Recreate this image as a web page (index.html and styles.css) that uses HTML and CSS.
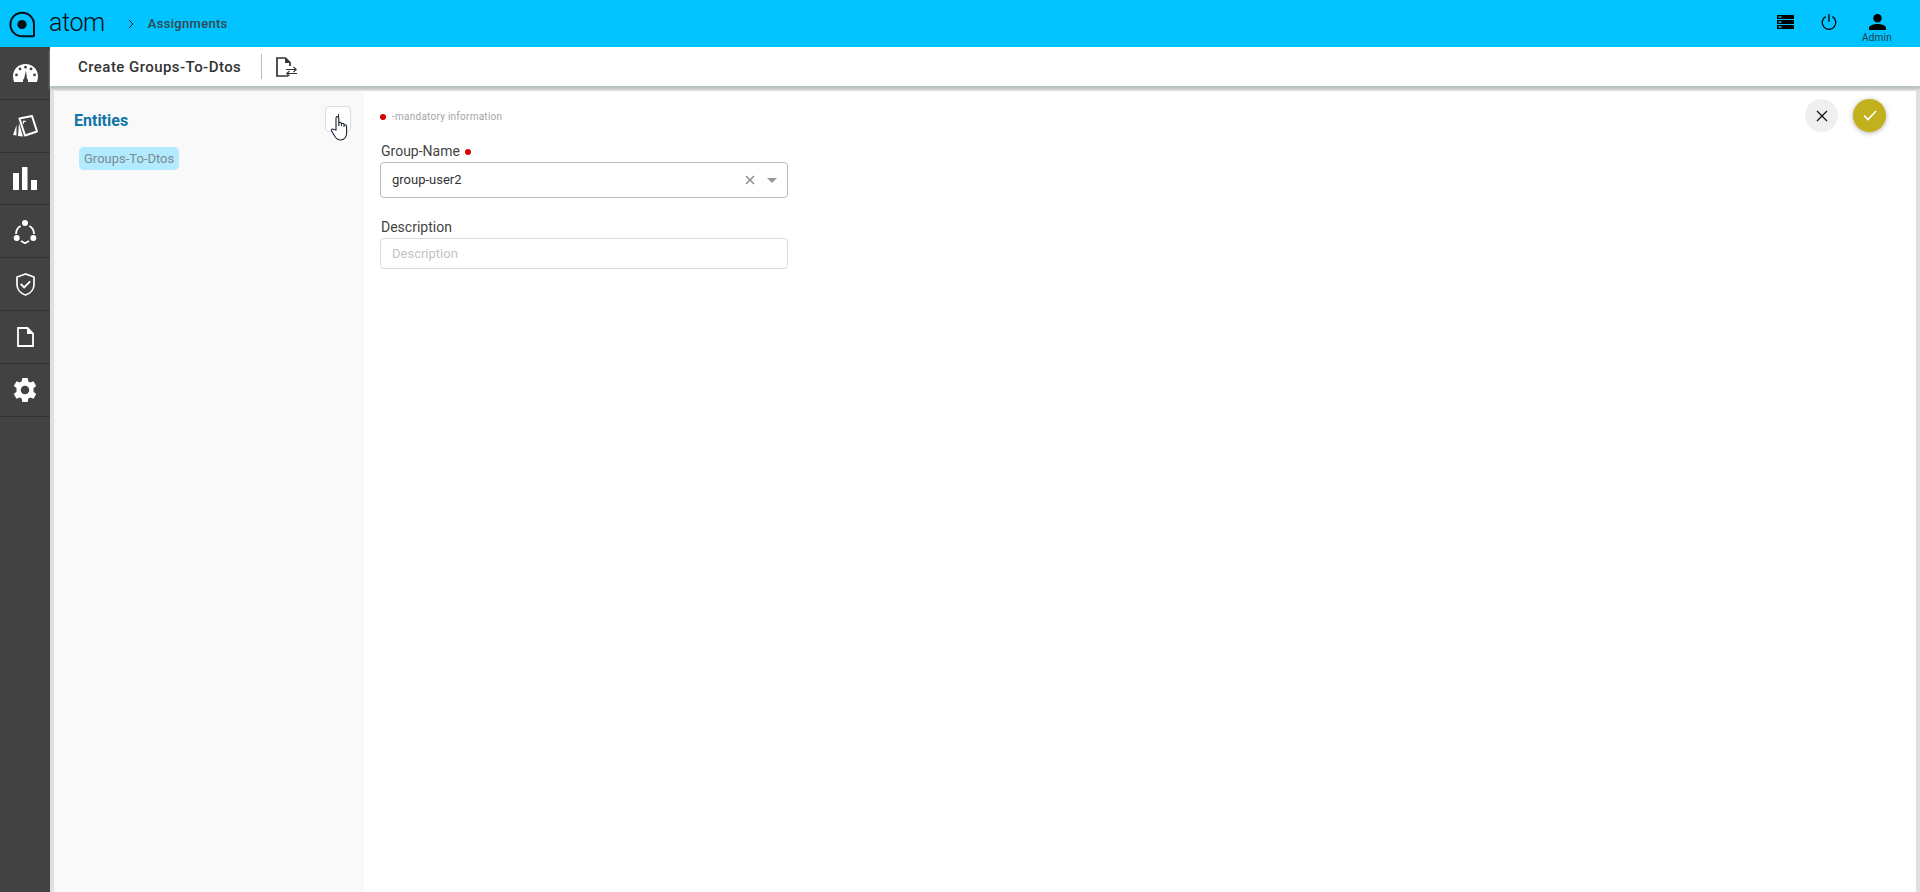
FILE: index.html
```html
<!DOCTYPE html>
<html lang="en">
<head>
<meta charset="utf-8">
<title>Create Groups-To-Dtos</title>
<link rel="stylesheet" href="styles.css">
</head>
<body>
<header class="topbar">
  <div class="brand">
    <svg class="brand-mark" width="27" height="27" viewBox="0 0 27 27"><path d="M25 25.500v-12a11.800 11.800 0 1 0-11.800 11.800H25" fill="none" stroke="#0a0f14" stroke-width="2"/><circle cx="13" cy="13.500" r="4.600" fill="#0a0f14"/></svg>
    <span class="brand-name">atom</span>
  </div>
  <svg class="crumb-arrow" width="8" height="10" viewBox="0 0 8 10"><path d="M2 1l4 4-4 4" fill="none" stroke="#222" stroke-width="1"/></svg>
  <span class="crumb">Assignments</span>
  <div class="top-actions">
    <svg class="top-icon" width="17" height="14" viewBox="0 0 17 14"><path fill="#000" fill-rule="evenodd" d="M0 0h17v4H0zM1.500 1.200v1.600h3V1.200zM0 5h17v4H0zM1.500 6.200v1.600h3V6.200zM0 10h17v4H0zM1.500 11.200v1.600h3v-1.600z"/></svg>
    <svg class="top-icon power" width="16" height="16" viewBox="0 0 16 16"><path d="M8 0v8M4.600 2.600a6.800 6.800 0 1 0 6.800 0" fill="none" stroke="#000" stroke-width="1.300"/></svg>
    <div class="user">
      <svg width="17" height="16" viewBox="0 0 17 16"><circle cx="8.500" cy="4.300" r="4.200"/><path d="M0 16v-2.100C0 11 5.200 9.900 8.500 9.900s8.500 1.100 8.500 4V16z"/></svg>
      <span class="user-name">Admin</span>
    </div>
  </div>
</header>
<div class="body-row">
  <nav class="sidebar">
    <a class="nav-item"><svg width="25" height="18" viewBox="0 0 25 18"><path fill="#fff" fill-rule="evenodd" d="M12.500 0C5.600 0 0 5.300 0 12.200c0 2.100.4 4 1.200 5.800h8.900a2.900 2.900 0 0 1 1-3.600l1.900-7.900 1 8a3 3 0 0 1 .9 3.500h9c.7-1.800 1.100-3.700 1.100-5.800C25 5.300 19.400 0 12.500 0zM7 3.500a1.400 1.400 0 1 1 0 2.800 1.400 1.400 0 0 1 0-2.800zM18 3.500a1.400 1.400 0 1 1 0 2.800 1.400 1.400 0 0 1 0-2.800zM12.500 1.800a1.400 1.400 0 1 1 0 2.800 1.400 1.400 0 0 1 0-2.800zM3.500 9.500a1.400 1.400 0 1 1 0 2.800 1.400 1.400 0 0 1 0-2.800zM21.500 9.500a1.400 1.400 0 1 1 0 2.800 1.400 1.400 0 0 1 0-2.800z"/></svg></a>
    <a class="nav-item"><svg width="25" height="22" viewBox="0 0 25 22"><path d="M6.500 3.500L19 1l5 15.500-12 4z" fill="none" stroke="#fff" stroke-width="2" stroke-linejoin="round"/><path d="M9.800 5.800v3h1.200V7h1.700V5.800z" fill="#fff"/><path fill="#fff" d="M3.500 10L0 20l3.500.5zM6 8L5 21l5 .5z"/></svg></a>
    <a class="nav-item"><svg width="24" height="23" viewBox="0 0 24 23"><path fill="#fff" d="M0 6h6v17H0zM9 0h5.500v23H9zM18 13h6v10h-6z"/></svg></a>
    <a class="nav-item"><svg width="24" height="24" viewBox="0 0 24 24"><g fill="#fff"><circle cx="12" cy="3" r="3"/><circle cx="3.700" cy="18" r="3"/><circle cx="20.300" cy="18" r="3"/></g><path d="M7.700 6C5 7.500 3 10.500 3 14M16.300 6c2.700 1.500 4.700 4.500 4.700 8M8 21l4 2.200 4-2.200" fill="none" stroke="#fff" stroke-width="1.800"/></svg></a>
    <a class="nav-item"><svg width="19" height="23" viewBox="0 0 19 23"><path d="M9.500 1L1 4v7.500C1 16.500 4.600 20.500 9.500 22c4.900-1.500 8.500-5.500 8.500-10.500V4z" fill="none" stroke="#fff" stroke-width="1.700"/><path d="M4.800 11l3.300 3.300 6-6" fill="none" stroke="#fff" stroke-width="1.900"/></svg></a>
    <a class="nav-item"><svg width="17" height="20" viewBox="0 0 17 20"><path d="M1 1h9.500L16 6.500V19H1z" fill="none" stroke="#fff" stroke-width="1.800"/><path d="M10 1v6h6z" fill="#fff"/></svg></a>
    <a class="nav-item"><svg width="24" height="24" viewBox="0 0 24 24"><path fill="#fff" fill-rule="evenodd" d="M9.300 0h5.400l.6 3.400 2 1.100 3.200-1.200 2.700 4.700-2.700 2.200v3.600l2.700 2.200-2.700 4.700-3.200-1.200-2 1.100-.6 3.400H9.300l-.6-3.400-2-1.100-3.200 1.200L.8 15.900l2.700-2.200v-3.600L.8 7.900l2.700-4.700 3.200 1.200 2-1.100zM12 7.700a4.300 4.300 0 1 0 0 8.600 4.300 4.300 0 0 0 0-8.600z"/></svg></a>
  </nav>
  <div class="workspace">
    <div class="subheader">
      <h1 class="page-title">Create Groups-To-Dtos</h1>
      <span class="divider"></span>
      <svg width="22" height="20" viewBox="0 0 22 20"><path d="M12 19H1V1h8.500L14 5.500V9" fill="none" stroke="#333" stroke-width="1.700"/><path d="M9 1v5h5z" fill="#333"/><path d="M10 12.500h10M17.500 10l2.700 2.500-2.700 2.500M21 16.500H11M13.500 14l-2.700 2.500 2.700 2.500" fill="none" stroke="#333" stroke-width="1.100"/></svg>
    </div>
    <div class="content">
      <aside class="entities">
        <div class="entities-head">
          <h2 class="entities-title">Entities</h2>
          <button class="add-btn" type="button"><span class="plus-stub"></span></button>
        </div>
        <span class="chip">Groups-To-Dtos</span>
      </aside>
      <main class="form-area">
        <div class="form-col">
          <p class="mandatory"><span class="dot"></span>-mandatory information</p>
          <div class="field first">
            <label class="field-label">Group-Name <span class="dot label-dot"></span></label>
            <div class="select">
              <span class="select-value">group-user2</span>
              <svg class="select-clear" width="10" height="10" viewBox="0 0 10 10"><path d="M1 1l8 8M9 1L1 9" stroke="#888" stroke-width="1.400"/></svg>
              <span class="select-caret"></span>
            </div>
          </div>
          <div class="field">
            <label class="field-label">Description</label>
            <div class="input">Description</div>
          </div>
        </div>
        <div class="form-actions">
          <button class="round-btn cancel" type="button"><svg width="12" height="12" viewBox="0 0 12 12"><path d="M1 1l10 10M11 1L1 11" stroke="#111" stroke-width="1.300"/></svg></button>
          <button class="round-btn confirm" type="button"><svg width="14" height="11" viewBox="0 0 14 11"><path d="M1 5.500l4 4 8-8.500" fill="none" stroke="#fff" stroke-width="1.600"/></svg></button>
        </div>
      </main>
    </div>
  </div>
</div>
<svg class="cursor" width="20" height="26" viewBox="0 0 20 26"><path d="M6 15V3a1.400 1.400 0 0 1 2.800 0v8V8.500a1.300 1.300 0 0 1 2.600 0V11 9.500a1.300 1.300 0 0 1 2.600 0V12v-1a1.300 1.300 0 0 1 2.600 0v7c0 4-2.500 7-6 7-3 0-4.500-1.500-6-4l-3-5c-.8-1.500 1-2.700 2.200-1.500z" fill="#fff" stroke="#1b2230" stroke-width="1.100"/></svg>
</body>
</html>
```
FILE: styles.css
```css
* { box-sizing: border-box; }
html, body { margin: 0; height: 100%; }
body {
  width: 1920px;
  height: 892px;
  overflow: hidden;
  position: relative;
  font-family: Roboto, "Liberation Sans", sans-serif;
  color: #333;
  display: flex;
  flex-direction: column;
  background: #e0e0e0;
}
.topbar {
  height: 47px;
  flex: none;
  background: #00c3ff;
  display: flex;
  align-items: center;
  padding-left: 9px;
}
.brand { display: flex; align-items: center; }
.brand-mark { display: block; margin-top: 2px; }
.brand-name {
  font-family: Roboto, sans-serif;
  font-size: 25px;
  line-height: 30px;
  font-weight: 300;
  color: #0a0f14;
  margin-left: 13px;
  letter-spacing: -.4px;
  margin-top: -2px;
}
.crumb-arrow { margin-left: 22px; }
.crumb {
  font-size: 13px;
  font-weight: 500;
  letter-spacing: .3px;
  color: #37474f;
  margin-left: 13px;
}
.top-actions { margin-left: auto; height: 100%; display: flex; align-items: center; padding-right: 28px; }
.top-icon { display: block; margin-top: -3px; }
.power { margin-left: 27px; }
.user {
  display: flex;
  flex-direction: column;
  align-items: center;
  align-self: flex-start;
  margin-left: 25px;
  width: 30px;
  margin-top: 14px;
}
.user svg { display: block; }
.user-name { font-size: 10px; line-height: 12px; color: #1f3a4a; margin-top: 2px; letter-spacing: .2px; }
.body-row { flex: 1; display: flex; min-height: 0; }
.sidebar { width: 50px; flex: none; background: #424242; }
.nav-item {
  height: 52.800px;
  padding-top: 1px;
  display: flex;
  align-items: center;
  justify-content: center;
  border-bottom: 1px solid #333;
}
.workspace { flex: 1; display: flex; flex-direction: column; min-width: 0; }
.subheader {
  height: 39px;
  flex: none;
  background: #fff;
  display: flex;
  align-items: center;
  padding-left: 28px;
  box-shadow: 0 3px 2px #b9c1c1;
  position: relative;
}
.page-title { margin: 0; font-size: 15px; font-weight: 500; color: #333; letter-spacing: .45px; }
.divider { width: 1px; height: 25px; background: #bbb; margin: 0 14px 0 20px; }
.content {
  flex: 1;
  min-height: 0;
  display: flex;
  margin: 5px 4px 0 4px;
  background: #fff;
}
.entities { width: 310px; flex: none; background: #f9f9f9; padding: 15px 13px 0 20px; }
.entities-head { display: flex; justify-content: space-between; align-items: center; }
.entities-title { margin: 3px 0 0; font-size: 16px; font-weight: 700; color: #0f75a8; }
.add-btn {
  width: 26px;
  height: 26px;
  padding: 0;
  border: 1px solid #d5dde3;
  border-radius: 4px;
  background: #fff;
  display: flex;
  align-items: center;
  justify-content: center;
}
.plus-stub { width: 1px; height: 10px; background: #333; }
.chip {
  display: inline-block;
  margin: 15px 0 0 5px;
  height: 23px;
  line-height: 23px;
  padding: 0 5px;
  border-radius: 5px;
  background: #b2ebff;
  color: #7d8a90;
  font-size: 13px;
}
.form-area { flex: 1; display: flex; justify-content: space-between; padding: 8px 30px 0 16px; }
.form-col { width: 408px; padding-top: 11px; }
.mandatory { margin: 0; display: flex; align-items: center; font-size: 10px; line-height: 14px; color: #a4a4a4; letter-spacing: .25px; }
.dot { display: inline-block; width: 6px; height: 6px; border-radius: 50%; background: #d50000; }
.mandatory .dot { margin-right: 6px; }
.label-dot { margin-left: 2px; vertical-align: 1px; }
.field { margin-top: 21px; }
.field.first { margin-top: 19px; }
.field-label { display: block; font-size: 14px; line-height: 17px; color: #444; margin-bottom: 2px; padding-left: 1px; }
.select {
  height: 36px;
  border: 1px solid #bdbdbd;
  border-radius: 4px;
  background: #fff;
  display: flex;
  align-items: center;
  padding: 0 10px 0 11px;
  font-size: 13px;
  color: #333;
}
.select-value { flex: 1; margin-top: -2px; }
.select-caret { width: 0; height: 0; border-left: 5px solid transparent; border-right: 5px solid transparent; border-top: 5px solid #999; margin-left: 12px; }
.input {
  height: 31px;
  border: 1px solid #dcdcdc;
  border-radius: 4px;
  line-height: 29px;
  padding-left: 11px;
  font-size: 13px;
  color: #c4c4c4;
}
.form-actions { display: flex; gap: 15px; align-self: flex-start; }
.round-btn {
  width: 33px;
  height: 33px;
  border: 0;
  border-radius: 50%;
  padding: 0;
  display: flex;
  align-items: center;
  justify-content: center;
}
.cancel { background: #efefef; }
.confirm { background: #c2b01c; box-shadow: 0 1px 5px rgba(0,0,0,.3); }
.cursor { position: absolute; left: 330px; top: 115px; }
```
